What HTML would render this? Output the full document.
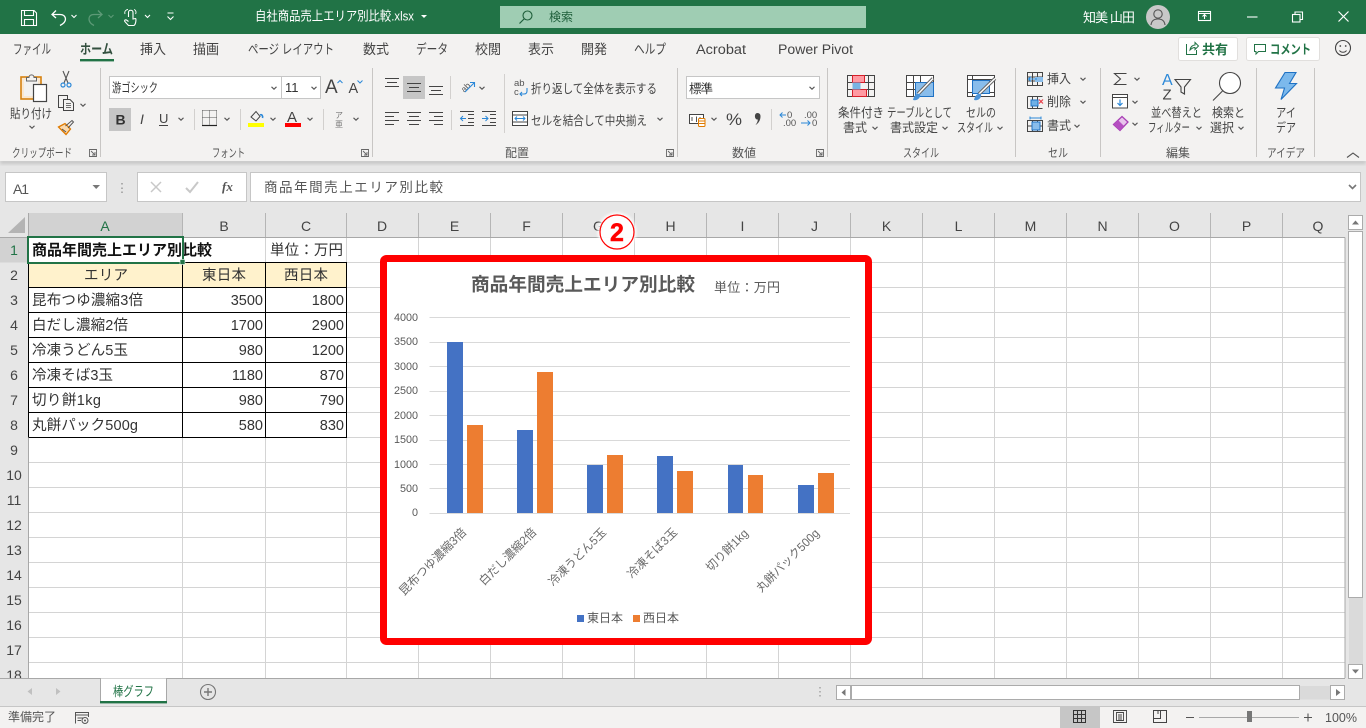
<!DOCTYPE html>
<html lang="ja"><head><meta charset="utf-8"><title>Excel</title>
<style>
html,body{margin:0;padding:0;width:1366px;height:728px;overflow:hidden;background:#e6e6e6}
svg{display:block;position:absolute;left:0;top:0}
text{font-family:"Liberation Sans","Noto Sans CJK JP",sans-serif;font-size:12px;fill:#444;white-space:pre}
.tab{font-size:13.5px;fill:#444}
.c{font-size:14.5px;fill:#333}
.h{font-size:14px;fill:#444;text-anchor:middle}
.g{font-size:12px;fill:#555}
.ax{font-size:10.8px;fill:#595959;text-anchor:end}
.rot{font-size:12px;fill:#6a6a6a;text-anchor:end}
.i{fill:none;stroke:#444;stroke-width:1}
</style></head><body>
<svg width="1366" height="728" viewBox="0 0 1366 728" xmlns="http://www.w3.org/2000/svg">
<defs>
<polyline id="ch" points="-2.5,-1.2 0,1.2 2.5,-1.2" fill="none" stroke="#555" stroke-width="1.1"/>
<filter id="sh" x="-5%" y="-50%" width="110%" height="200%"><feGaussianBlur stdDeviation="1.5"/></filter>
<filter id="gl" x="-30%" y="-30%" width="160%" height="160%"><feGaussianBlur stdDeviation="1.2"/></filter>
</defs>

<!-- base -->
<rect width="1366" height="728" fill="#e6e6e6"/>
<rect x="0" y="160" width="1366" height="4" fill="#c4c4c4" filter="url(#sh)"/>
<rect width="1366" height="161" fill="#f3f2f1"/>
<rect width="1366" height="34" fill="#217346"/>

<!-- quick access -->
<g fill="none" stroke="#fff" stroke-width="1.1">
<path d="M21.5 10.5H34L36.5 13V25.5H21.5Z"/><path d="M24.5 10.5V15.5H33.5V10.5"/><path d="M24.5 25.5V19.5H33.5V25.5"/>
<path d="M56 10.5L52 14.5L56 18M52.5 14.5H60C64 14.5 65.5 17 65.5 19C65.5 22 63 24 60 25.5" stroke-width="1.3"/>
<path d="M98 10.5L102 14.5L98 18M101.5 14.5H94C90 14.5 89 17 89 19C89 22 91 24 94 25.5" stroke="#5d9a77" stroke-width="1.3"/>
<path d="M128.5 17V12.5C128.5 9.5 133 9.5 133 12.5V19L135.5 18.5C136.5 18.5 135.8 25.5 133.5 25.5H128.5L124.8 21.5C124.2 20 125.5 19.5 126.5 20L128.5 21.5"/>
<path d="M125 14C124 11 126.5 9.5 128 9.5M134 9.5C136 10 136.5 12.5 135.5 14" stroke-width=".9"/>
</g>
<polyline points="71.5,15 74,17.5 76.5,15" fill="none" stroke="#fff" stroke-width="1.1"/>
<polyline points="108.5,15 111,17.5 113.5,15" fill="none" stroke="#5d9a77" stroke-width="1.1"/>
<polyline points="145,15 147.5,17.5 150,15" fill="none" stroke="#fff" stroke-width="1.1"/>
<path d="M167.5 13H173.5M167.5 16.5L170.5 19.5L173.5 16.5" fill="none" stroke="#fff" stroke-width="1.1"/>
<text x="255" y="20.5" style="font-size:13px;fill:#fff" textLength="159" lengthAdjust="spacingAndGlyphs">自社商品売上エリア別比較.xlsx</text>
<path d="M421 15H427L424 18Z" fill="#fff"/>

<!-- search -->
<rect x="500" y="6" width="366" height="22" fill="#9fcdb3"/>
<circle cx="527.500" cy="15.500" r="4.500" fill="none" stroke="#1f5f3b" stroke-width="1.100"/>
<path d="M524 19L519.500 23.500" stroke="#1f5f3b" stroke-width="1.200"/>
<text x="549" y="21" style="font-size:12px;fill:#1f5f3b" textLength="24">検索</text>

<!-- account -->
<text x="1083" y="22" style="font-size:13px;fill:#fff" textLength="52">知美 山田</text>
<circle cx="1158" cy="17" r="12" fill="#c8c8c8"/>
<circle cx="1158" cy="14" r="4.200" fill="none" stroke="#555" stroke-width="1.100"/>
<path d="M1151 25C1151.500 20.500 1154 19 1158 19C1162 19 1164.500 20.500 1165 25" fill="none" stroke="#555" stroke-width="1.100"/>
<g fill="none" stroke="#fff" stroke-width="1.100">
<rect x="1198.500" y="11.500" width="12" height="9"/><path d="M1198.500 13.500H1210.500M1204.500 19V15M1202.500 16.500L1204.500 14.500L1206.500 16.500"/>
<path d="M1247 17H1257.500"/>
<rect x="1292.500" y="14.500" width="7.500" height="7.500"/><path d="M1295 14.500V12H1302.500V19.500H1300"/>
<path d="M1338.500 11.500L1348.500 21.500M1348.500 11.500L1338.500 21.500" stroke-width="1.200"/>
</g>

<!-- tabs -->
<text class="tab" x="13" y="54" textLength="38" lengthAdjust="spacingAndGlyphs">ファイル</text>
<text x="80" y="54" textLength="33" lengthAdjust="spacingAndGlyphs" style="font-weight:700;fill:#33503f;font-size:13.500px">ホーム</text>
<rect x="80" y="59" width="34" height="2.400" fill="#217346"/>
<text class="tab" x="140" y="54" textLength="26" lengthAdjust="spacingAndGlyphs">挿入</text>
<text class="tab" x="193" y="54" textLength="26" lengthAdjust="spacingAndGlyphs">描画</text>
<text class="tab" x="248" y="54" textLength="86" lengthAdjust="spacingAndGlyphs">ページ レイアウト</text>
<text class="tab" x="363" y="54" textLength="26" lengthAdjust="spacingAndGlyphs">数式</text>
<text class="tab" x="416" y="54" textLength="32" lengthAdjust="spacingAndGlyphs">データ</text>
<text class="tab" x="475" y="54" textLength="26" lengthAdjust="spacingAndGlyphs">校閲</text>
<text class="tab" x="528" y="54" textLength="26" lengthAdjust="spacingAndGlyphs">表示</text>
<text class="tab" x="581" y="54" textLength="26" lengthAdjust="spacingAndGlyphs">開発</text>
<text class="tab" x="634" y="54" textLength="32" lengthAdjust="spacingAndGlyphs">ヘルプ</text>
<text class="tab" x="696" y="54" textLength="50" lengthAdjust="spacingAndGlyphs">Acrobat</text>
<text class="tab" x="778" y="54" textLength="75" lengthAdjust="spacingAndGlyphs">Power Pivot</text>

<!-- share / comment -->
<rect x="1178.500" y="37.500" width="59" height="23" rx="2" fill="#fff" stroke="#e1dfdd"/>
<path d="M1187 44.500H1186.500V54.500H1196.500V50M1190 50C1190.500 46.500 1193 45 1195 45V42.500L1198.500 46L1195 49.500V47.500C1193 47.500 1191.500 48.500 1190 50Z" fill="none" stroke="#217346" stroke-width="1"/>
<text x="1202" y="54" style="font-size:13px;font-weight:700;fill:#217346" textLength="26">共有</text>
<rect x="1246.500" y="37.500" width="73" height="23" rx="2" fill="#fff" stroke="#e1dfdd"/>
<path d="M1254.500 44.500H1265.500V51.500H1258.500L1256 54V51.500H1254.500Z" fill="none" stroke="#217346" stroke-width="1"/>
<text x="1270" y="54" style="font-size:13px;font-weight:700;fill:#217346" textLength="41" lengthAdjust="spacingAndGlyphs">コメント</text>
<circle cx="1343" cy="48" r="7.500" fill="none" stroke="#444" stroke-width="1.100"/>
<circle cx="1340.300" cy="46" r=".9" fill="#444"/><circle cx="1345.700" cy="46" r=".9" fill="#444"/>
<path d="M1339.500 50.500C1341 52.800 1345 52.800 1346.500 50.500" fill="none" stroke="#444"/>

<!-- separators -->
<path d="M100.500 68V157M372.500 68V157M677.500 68V157M827.500 68V157M1015.500 68V157M1100.500 68V157M1256.500 68V157M1314.500 68V157" stroke="#c8c6c4" fill="none"/>
<path d="M194.500 109V130M240.500 109V130M323.500 109V130M450.500 76V99M451.500 110V130M504.500 74V133M771.500 109V130" stroke="#d2d0ce" fill="none"/>

<!-- group labels -->
<text class="g" x="12" y="157" textLength="60" lengthAdjust="spacingAndGlyphs">クリップボード</text>
<text class="g" x="212" y="157" textLength="33" lengthAdjust="spacingAndGlyphs">フォント</text>
<text class="g" x="505" y="157" textLength="24" lengthAdjust="spacingAndGlyphs">配置</text>
<text class="g" x="732" y="157" textLength="24" lengthAdjust="spacingAndGlyphs">数値</text>
<text class="g" x="903" y="157" textLength="36" lengthAdjust="spacingAndGlyphs">スタイル</text>
<text class="g" x="1048" y="157" textLength="20" lengthAdjust="spacingAndGlyphs">セル</text>
<text class="g" x="1166" y="157" textLength="24" lengthAdjust="spacingAndGlyphs">編集</text>
<text class="g" x="1267" y="157" textLength="38" lengthAdjust="spacingAndGlyphs">アイデア</text>
<g fill="none" stroke="#666" stroke-width=".9">
<path d="M89.500 149.500H96.500V156.500H89.500ZM91 151L95 155M95 152V155H92"/>
<path d="M361.500 149.500H368.500V156.500H361.500ZM363 151L367 155M367 152V155H364"/>
<path d="M666.500 149.500H673.500V156.500H666.500ZM668 151L672 155M672 152V155H669"/>
<path d="M816.500 149.500H823.500V156.500H816.500ZM818 151L822 155M822 152V155H819"/>
</g>
<polyline points="1347,157.500 1353,153 1359,157.500" fill="none" stroke="#555" stroke-width="1.100"/>

<!-- clipboard -->
<rect x="21" y="77" width="20" height="22" fill="#fbe8cf" stroke="#d6810f" stroke-width="1.600"/>
<rect x="24" y="80" width="14" height="16" fill="#f3f2f1"/>
<path d="M26.500 81V77.500H29C29 74 34 74 34 77.500H36.500V81Z" fill="#f3f2f1" stroke="#666"/>
<rect x="33.500" y="84.500" width="13" height="17" fill="#fff" stroke="#444" stroke-width="1.200"/>
<text x="10" y="118" style="font-size:12.500px;fill:#444" textLength="42" lengthAdjust="spacingAndGlyphs">貼り付け</text>
<use href="#ch" x="32" y="127"/>
<path d="M63 71L68 83M69 71L64 83" stroke="#555" fill="none" stroke-width="1.100"/>
<circle cx="63" cy="85" r="2" fill="none" stroke="#2b88d8" stroke-width="1.200"/><circle cx="69" cy="85" r="2" fill="none" stroke="#2b88d8" stroke-width="1.200"/>
<g class="i"><path d="M63.500 107.500H58.500V95.500H67.500V99"/><path d="M63.500 99.500H70L73.500 103V110.500H63.500Z" fill="#f3f2f1"/><path d="M66 103.500H71M66 105.500H71M66 107.500H71" stroke-width=".8"/></g>
<use href="#ch" x="83" y="105"/>
<path d="M58.500 127L65 123.500L70.500 129L66 134.500C63 131.500 61 129.500 58.500 127Z" fill="#fbd9ac" stroke="#e07b00" stroke-width="1.300"/>
<path d="M62 129L66 132M65.500 126L72 120.500L73.500 122L68 128" stroke="#555" fill="none"/>

<!-- font -->
<rect x="109.500" y="76.500" width="172" height="22" fill="#fff" stroke="#c6c6c6"/>
<rect x="281.500" y="76.500" width="39" height="22" fill="#fff" stroke="#c6c6c6"/>
<text x="112" y="92" style="font-size:12.500px;fill:#333" textLength="46" lengthAdjust="spacingAndGlyphs">游ゴシック</text>
<text x="285" y="92" style="font-size:13px;fill:#333">11</text>
<use href="#ch" x="274" y="88"/><use href="#ch" x="314" y="88"/>
<text x="325" y="93" style="font-size:19px;fill:#444">A</text>
<path d="M337.500 83L340 80.500L342.500 83" fill="none" stroke="#2b88d8"/>
<text x="348.500" y="93" style="font-size:14.500px;fill:#444">A</text>
<path d="M357.500 80.500L360 83L362.500 80.500" fill="none" stroke="#2b88d8"/>
<rect x="109" y="108" width="22" height="23" fill="#c6c6c6"/>
<text x="115.500" y="124.500" style="font-size:14px;font-weight:700;fill:#333">B</text>
<text x="140" y="124" style="font-size:14px;font-style:italic;fill:#444">I</text>
<text x="159" y="123" style="font-size:13px;fill:#444">U</text>
<path d="M159 125.500H168" stroke="#444"/>
<use href="#ch" x="181" y="119"/>
<path d="M202.500 110.500H217M202.500 117.500H217M202.500 110.500V125M209.500 110.500V125M216.500 110.500V125" stroke="#555" stroke-dasharray="1 1" fill="none"/>
<path d="M202 125.500H217" stroke="#222" stroke-width="1.200"/>
<use href="#ch" x="227" y="119"/>
<path d="M251 117L256 111.500L260 116.500L256 121Z" fill="none" stroke="#444"/>
<path d="M260 115C262 114 263 116 262.500 118" fill="none" stroke="#2b88d8" stroke-width="1.600"/>
<rect x="248" y="123" width="16" height="4" fill="#ffff00"/>
<use href="#ch" x="273" y="119"/>
<text x="287" y="122" style="font-size:15px;fill:#444">A</text>
<rect x="285" y="123" width="16" height="4" fill="#f00"/>
<use href="#ch" x="310" y="119"/>
<text x="335" y="118" style="font-size:8px;fill:#777">ア</text>
<text x="335" y="127" style="font-size:8px;fill:#777">亜</text>
<use href="#ch" x="356" y="119"/>

<!-- alignment -->
<rect x="403" y="76" width="22" height="23" fill="#c6c6c6"/>
<g stroke="#444" fill="none">
<path d="M385 78.500H399M387 82.500H397M385 86.500H399"/>
<path d="M407 83.500H421M409 87.500H419M407 91.500H421"/>
<path d="M429 86.500H443M431 90.500H441M429 94.500H443"/>
<path d="M385 112.500H399M385 116.500H394M385 120.500H399M385 124.500H394"/>
<path d="M407 112.500H421M409 116.500H419M407 120.500H421M409 124.500H419"/>
<path d="M429 112.500H443M434 116.500H443M429 120.500H443M434 124.500H443"/>
<path d="M468 114.500H474M468 118.500H474M468 122.500H474M460 125.500H474M460 111.500H474" stroke-width=".9"/>
<path d="M490 114.500H496M490 118.500H496M490 122.500H496M482 125.500H496M482 111.500H496" stroke-width=".9"/>
</g>
<path d="M466 118.500H460.500M463 116L460.500 118.500L463 121" stroke="#2b88d8" fill="none"/>
<path d="M482 118.500H488M485.500 116L488 118.500L485.500 121" stroke="#2b88d8" fill="none"/>
<text x="459" y="90" transform="rotate(-45 465 85)" style="font-size:8.500px;fill:#555">ab</text>
<path d="M465 92L474 83M470 82.500H474.500V87" stroke="#2b88d8" fill="none" stroke-width="1.100"/>
<use href="#ch" x="482" y="88"/>
<text x="514" y="86" style="font-size:9.500px;fill:#555">ab</text>
<text x="514" y="95" style="font-size:9.500px;fill:#555">c</text>
<path d="M527 88V91C527 93 526 94 524 94H520M522 92L520 94L522 96" stroke="#2b88d8" fill="none" stroke-width="1.100"/>
<text x="531" y="93" style="font-size:12.500px;fill:#444" textLength="126" lengthAdjust="spacingAndGlyphs">折り返して全体を表示する</text>
<rect x="512.500" y="111.500" width="15" height="14" fill="#fff" stroke="#444"/>
<path d="M512.500 115H527.500M512.500 122H527.500" stroke="#444" fill="none"/>
<path d="M515 118.500H525M517 116.500L515 118.500L517 120.500M523 116.500L525 118.500L523 120.500" stroke="#2b88d8" fill="none"/>
<text x="531" y="125" style="font-size:12.500px;fill:#444" textLength="116" lengthAdjust="spacingAndGlyphs">セルを結合して中央揃え</text>
<use href="#ch" x="660" y="119"/>

<!-- number -->
<rect x="686.500" y="76.500" width="133" height="22" fill="#fff" stroke="#c6c6c6"/>
<text x="689" y="93" style="font-size:12.500px;fill:#333" textLength="24">標準</text>
<use href="#ch" x="812" y="88"/>
<rect x="689.500" y="114.500" width="14" height="9" fill="#fff" stroke="#444"/>
<path d="M692 117V121M696.500 116.500V122M700 117V121" stroke="#555" fill="none"/>
<rect x="698.500" y="118.500" width="6.500" height="8" rx="1" fill="#fff" stroke="#e07b00"/>
<path d="M698.500 121H705M698.500 123.500H705" stroke="#e07b00" fill="none"/>
<use href="#ch" x="714" y="119"/>
<text x="726" y="125" style="font-size:17px;fill:#444" textLength="16" lengthAdjust="spacingAndGlyphs">%</text>
<path d="M757.500 113a3 3 0 0 1 3 3.500c0 3.500 -2 7 -5 8.500c1.500 -2 2.300 -3.500 2.300 -5.500c-3.500 .5 -4 -6.500 -.3 -6.500Z" fill="#444"/>
<text x="787" y="118" style="font-size:9.500px;fill:#555">0</text>
<text x="783" y="126" style="font-size:9.500px;fill:#555">.00</text>
<path d="M786 115H780M782.500 112.500L780 115L782.500 117.500" stroke="#2b88d8" fill="none"/>
<text x="804" y="118" style="font-size:9.500px;fill:#555">.00</text>
<text x="812" y="126" style="font-size:9.500px;fill:#555">0</text>
<path d="M801 123H810M807.500 120.500L810 123L807.500 125.500" stroke="#2b88d8" fill="none"/>

<!-- styles -->
<g fill="none" stroke="#444" stroke-width="1">
<rect x="847.500" y="75.500" width="27" height="21"/>
<path d="M847.500 82.500H874.500M847.500 89.500H874.500M854.500 75.500V96.500M868.500 75.500V96.500"/>
</g>
<path d="M852.500 75.500H864.500V82.500H852.500ZM852.500 89.500H866.500V96.500H852.500Z" fill="#ff9aa2" stroke="#d6202a"/>
<rect x="852.500" y="82.500" width="8" height="7" fill="#79b4e3"/>
<text x="838" y="117" style="font-size:12.500px;fill:#444" textLength="46" lengthAdjust="spacingAndGlyphs">条件付き</text>
<text x="843" y="132" style="font-size:12.500px;fill:#444" textLength="24" lengthAdjust="spacingAndGlyphs">書式</text>
<use href="#ch" x="875" y="128"/>

<rect x="906.500" y="75.500" width="27" height="21" fill="#fff" stroke="#444"/>
<path d="M906.500 82.500H933.500M906.500 89.500H933.500M913.500 75.500V96.500M920.500 75.500V96.500" stroke="#444" fill="none"/>
<rect x="915.500" y="82.500" width="18" height="14" fill="#89bdeb" stroke="#1f72c4"/>
<path d="M918 94L933 78.500" stroke="#666" stroke-width="3.500"/><path d="M918 94L933 78.500" stroke="#fff" stroke-width="1.500"/>
<path d="M913 100C914 95 917 93 920 94C921 98 917 101 913 100Z" fill="#4a93d8"/>
<text x="887" y="117" style="font-size:12.500px;fill:#444" textLength="65" lengthAdjust="spacingAndGlyphs">テーブルとして</text>
<text x="890" y="132" style="font-size:12.500px;fill:#444" textLength="48" lengthAdjust="spacingAndGlyphs">書式設定</text>
<use href="#ch" x="945" y="128"/>

<rect x="967.500" y="75.500" width="27" height="21" fill="#fff" stroke="#444"/>
<path d="M967.500 79.500H994.500M967.500 92.500H994.500M972.500 75.500V96.500" stroke="#444" fill="none"/>
<rect x="972.500" y="80.500" width="17" height="13" fill="#89bdeb" stroke="#1f72c4"/>
<path d="M979 94L995 78.500" stroke="#666" stroke-width="3.500"/><path d="M979 94L995 78.500" stroke="#fff" stroke-width="1.500"/>
<path d="M974 100C975 95 978 93 981 94C982 98 978 101 974 100Z" fill="#4a93d8"/>
<text x="966" y="117" style="font-size:12.500px;fill:#444" textLength="30" lengthAdjust="spacingAndGlyphs">セルの</text>
<text x="957" y="132" style="font-size:12.500px;fill:#444" textLength="36" lengthAdjust="spacingAndGlyphs">スタイル</text>
<use href="#ch" x="1000" y="128"/>

<!-- cells -->
<g fill="none" stroke="#444">
<path d="M1027.500 72.500H1042.500V85.500H1027.500ZM1027.500 77H1042.500M1027.500 81H1042.500M1032.500 72.500V85.500M1037.500 72.500V85.500"/>
<path d="M1027.500 96.500H1042.500M1027.500 108.500H1042.500M1027.500 96.500V108.500M1032.500 96.500V108.500M1037.500 96.500V100M1037.500 105V108.500"/>
<path d="M1027.500 120.500H1042.500V131.500H1027.500ZM1027.500 126H1042.500M1032.500 120.500V131.500M1037.500 120.500V131.500"/>
</g>
<rect x="1035" y="77" width="8" height="5" fill="#89bdeb"/>
<path d="M1037 79H1028.500M1031 76.500L1028.500 79L1031 81.500" stroke="#2b88d8" fill="none"/>
<rect x="1031" y="100" width="7" height="6" fill="#6fb0e6" stroke="#1f72c4"/>
<path d="M1039 99.500L1043 103.500M1043 99.500L1039 103.500" stroke="#e8404a" stroke-width="1.200"/>
<rect x="1032" y="122" width="8" height="8" fill="#89bdeb" stroke="#1f72c4"/>
<path d="M1030 118H1041M1030 116.500V119.500M1041 116.500V119.500" stroke="#2b88d8" fill="none"/>
<text x="1047" y="83" style="font-size:12.500px;fill:#444" textLength="24" lengthAdjust="spacingAndGlyphs">挿入</text>
<text x="1047" y="106" style="font-size:12.500px;fill:#444" textLength="24" lengthAdjust="spacingAndGlyphs">削除</text>
<text x="1047" y="130" style="font-size:12.500px;fill:#444" textLength="24" lengthAdjust="spacingAndGlyphs">書式</text>
<use href="#ch" x="1083" y="79"/><use href="#ch" x="1083" y="102"/><use href="#ch" x="1077" y="126"/>

<!-- editing -->
<path d="M1126.500 73.500H1114.500L1120.500 79L1114.500 84.500H1126.500" fill="none" stroke="#444" stroke-width="1.100"/>
<use href="#ch" x="1137" y="79"/>
<rect x="1112.500" y="94.500" width="15" height="13.500" fill="#fff" stroke="#444"/>
<path d="M1112.500 97.500H1127.500" stroke="#444"/>
<path d="M1120 99.500V105.500M1117.500 103L1120 105.500L1122.500 103" stroke="#2b88d8" fill="none" stroke-width="1.200"/>
<use href="#ch" x="1135" y="102"/>
<path d="M1113.500 124.500L1122 116.500L1128 122L1120 130.500Z" fill="#e8c4ec" stroke="#a83fb5" stroke-width="1.300"/>
<path d="M1113.500 124.500L1118 120L1124 126L1120 130.500Z" fill="#b54fc1"/>
<use href="#ch" x="1135" y="124"/>
<text x="1162" y="85" style="font-size:16px;fill:#2b88d8">A</text>
<text x="1162.500" y="99.500" style="font-size:15px;fill:#444">Z</text>
<path d="M1175 79.500H1190.500L1184.500 87V94L1181 92V87Z" fill="none" stroke="#444" stroke-width="1.100"/>
<text x="1151" y="117" style="font-size:12.500px;fill:#444" textLength="51" lengthAdjust="spacingAndGlyphs">並べ替えと</text>
<text x="1148" y="132" style="font-size:12.500px;fill:#444" textLength="42" lengthAdjust="spacingAndGlyphs">フィルター</text>
<use href="#ch" x="1199" y="128"/>
<circle cx="1230" cy="83" r="10.500" fill="#fff" stroke="#444" stroke-width="1.100"/>
<path d="M1222.500 91L1213 100.500" stroke="#444" stroke-width="1.100"/>
<text x="1212" y="117" style="font-size:12.500px;fill:#444" textLength="33" lengthAdjust="spacingAndGlyphs">検索と</text>
<text x="1210" y="132" style="font-size:12.500px;fill:#444" textLength="24" lengthAdjust="spacingAndGlyphs">選択</text>
<use href="#ch" x="1241" y="128"/>

<!-- ideas -->
<path d="M1285 72.500H1296L1289.500 83.500H1296.500L1281 99.500L1284.500 88H1275.500Z" fill="#7cb9ec" stroke="#1f72c4" stroke-width="1.100"/>
<text x="1276" y="117" style="font-size:12.500px;fill:#444" textLength="20" lengthAdjust="spacingAndGlyphs">アイ</text>
<text x="1276" y="132" style="font-size:12.500px;fill:#444" textLength="20" lengthAdjust="spacingAndGlyphs">デア</text>

<!-- formula bar -->
<rect x="5.500" y="172.500" width="101" height="29" fill="#fff" stroke="#c6c6c6"/>
<text x="13" y="194" style="font-size:14px;fill:#555" textLength="16">A1</text>
<path d="M92.500 185H100L96.200 189Z" fill="#777"/>
<path d="M122 183v1.500M122 187.500v1.500M122 191.500v1.500" stroke="#999" stroke-width="1.500"/>
<rect x="137.500" y="172.500" width="109" height="29" fill="#fff" stroke="#c6c6c6"/>
<path d="M151 182L161 192M161 182L151 192" stroke="#c8c8c8" stroke-width="1.500" fill="none"/>
<path d="M186 188L190 192L198 182" stroke="#c8c8c8" stroke-width="2" fill="none"/>
<text x="222" y="191" style="font-size:13px;font-style:italic;font-weight:700;fill:#555;font-family:'Liberation Serif',serif">fx</text>
<rect x="250.500" y="172.500" width="1110" height="29" fill="#fff" stroke="#c6c6c6"/>
<text x="264" y="192" style="font-size:13.500px;fill:#555" textLength="179">商品年間売上エリア別比較</text>
<polyline points="1349,185 1352.500,188.500 1356,185" fill="none" stroke="#777" stroke-width="1.600"/>

<!-- grid headers -->
<rect x="0" y="213" width="1346" height="25" fill="#e6e6e6"/>
<rect x="29" y="213" width="153.500" height="24" fill="#d2d2d2"/>
<rect x="0" y="238" width="29" height="24.500" fill="#d2d2d2"/>
<path d="M25 217V233H8Z" fill="#b4b4b4"/>
<path d="M182.500 213V237M265.500 213V237M346.500 213V237M418.500 213V237M490.500 213V237M562.500 213V237M634.500 213V237M706.500 213V237M778.500 213V237M850.500 213V237M922.500 213V237M994.500 213V237M1066.500 213V237M1138.500 213V237M1210.500 213V237M1282.500 213V237" stroke="#b5b5b5" fill="none"/>

<rect x="29" y="238" width="1316" height="440" fill="#fff"/>
<path d="M182.500 238V678M265.500 238V678M346.500 238V678M418.500 238V678M490.500 238V678M562.500 238V678M634.500 238V678M706.500 238V678M778.500 238V678M850.500 238V678M922.500 238V678M994.500 238V678M1066.500 238V678M1138.500 238V678M1210.500 238V678M1282.500 238V678" stroke="#d4d4d4" fill="none"/>
<path d="M29 262.500H1345M29 287.500H1345M29 312.500H1345M29 337.500H1345M29 362.500H1345M29 387.500H1345M29 412.500H1345M29 437.500H1345M29 462.500H1345M29 487.500H1345M29 512.500H1345M29 537.500H1345M29 562.500H1345M29 587.500H1345M29 612.500H1345M29 637.500H1345M29 662.500H1345" stroke="#d4d4d4" fill="none"/>
<path d="M0 237.500H1345M28.500 213V678M1345 237.500V678" stroke="#a8a8a8" fill="none"/>

<text class="h" x="105" y="231" style="fill:#217346">A</text><text class="h" x="224" y="231">B</text><text class="h" x="306" y="231">C</text><text class="h" x="382" y="231">D</text><text class="h" x="454.500" y="231">E</text><text class="h" x="526.500" y="231">F</text><text class="h" x="598.500" y="231">G</text><text class="h" x="670.500" y="231">H</text><text class="h" x="742.500" y="231">I</text><text class="h" x="814.500" y="231">J</text><text class="h" x="886.500" y="231">K</text><text class="h" x="958.500" y="231">L</text><text class="h" x="1030.500" y="231">M</text><text class="h" x="1102.500" y="231">N</text><text class="h" x="1174.500" y="231">O</text><text class="h" x="1246.500" y="231">P</text><text class="h" x="1318" y="231">Q</text>
<text class="h" x="14" y="255" style="fill:#217346">1</text><text class="h" x="14" y="280">2</text><text class="h" x="14" y="305">3</text><text class="h" x="14" y="330">4</text><text class="h" x="14" y="355">5</text><text class="h" x="14" y="380">6</text><text class="h" x="14" y="405">7</text><text class="h" x="14" y="430">8</text><text class="h" x="14" y="455">9</text><text class="h" x="14" y="480">10</text><text class="h" x="14" y="505">11</text><text class="h" x="14" y="530">12</text><text class="h" x="14" y="555">13</text><text class="h" x="14" y="580">14</text><text class="h" x="14" y="605">15</text><text class="h" x="14" y="630">16</text><text class="h" x="14" y="655">17</text><text class="h" x="14" y="680">18</text>

<!-- table -->
<rect x="29" y="263" width="318" height="24" fill="#fff2cc"/>
<path d="M29 262.500H347M29 287.500H347M29 312.500H347M29 337.500H347M29 362.500H347M29 387.500H347M29 412.500H347M29 437.500H347M182.500 262.500V437.500M265.500 262.500V437.500M346.500 262.500V437.500M28.500 262.500V437.500" stroke="#000" fill="none"/>
<text x="32" y="255" style="font-size:15px;font-weight:700;fill:#111" textLength="180" lengthAdjust="spacingAndGlyphs">商品年間売上エリア別比較</text>
<text class="c" x="270" y="255" textLength="73">単位：万円</text>
<text class="c" x="84" y="280" textLength="44">エリア</text>
<text class="c" x="202" y="280" textLength="44">東日本</text>
<text class="c" x="284" y="280" textLength="44">西日本</text>
<text class="c" x="32" y="305" textLength="111">昆布つゆ濃縮3倍</text>
<text class="c" x="32" y="330" textLength="96">白だし濃縮2倍</text>
<text class="c" x="32" y="355" textLength="96">冷凍うどん5玉</text>
<text class="c" x="32" y="380" textLength="81">冷凍そば3玉</text>
<text class="c" x="32" y="405" textLength="69">切り餅1kg</text>
<text class="c" x="32" y="430" textLength="106">丸餅パック500g</text>
<text class="c" x="263" y="305" text-anchor="end">3500</text><text class="c" x="344" y="305" text-anchor="end">1800</text>
<text class="c" x="263" y="330" text-anchor="end">1700</text><text class="c" x="344" y="330" text-anchor="end">2900</text>
<text class="c" x="263" y="355" text-anchor="end">980</text><text class="c" x="344" y="355" text-anchor="end">1200</text>
<text class="c" x="263" y="380" text-anchor="end">1180</text><text class="c" x="344" y="380" text-anchor="end">870</text>
<text class="c" x="263" y="405" text-anchor="end">980</text><text class="c" x="344" y="405" text-anchor="end">790</text>
<text class="c" x="263" y="430" text-anchor="end">580</text><text class="c" x="344" y="430" text-anchor="end">830</text>
<rect x="28" y="237" width="155" height="26" fill="none" stroke="#217346" stroke-width="2"/>
<rect x="180" y="259.500" width="5" height="5" fill="#217346" stroke="#fff" stroke-width=".6"/>

<!-- chart -->
<rect x="383.500" y="258.500" width="485" height="383" rx="3" fill="#fff" stroke="#f00" stroke-width="7"/>
<text x="471" y="291" style="font-size:18.600px;font-weight:700;fill:#595959" textLength="224" lengthAdjust="spacingAndGlyphs">商品年間売上エリア別比較</text>
<text x="714" y="292" style="font-size:13px;fill:#595959" textLength="66">単位：万円</text>
<path d="M429.500 317.500H850M429.500 342.500H850M429.500 366.500H850M429.500 391.500H850M429.500 415.500H850M429.500 440.500H850M429.500 464.500H850M429.500 488.500H850M429.500 513.500H850" stroke="#d9d9d9" fill="none"/>
<text class="ax" x="418" y="321">4000</text><text class="ax" x="418" y="345">3500</text><text class="ax" x="418" y="370">3000</text><text class="ax" x="418" y="394">2500</text><text class="ax" x="418" y="419">2000</text><text class="ax" x="418" y="443">1500</text><text class="ax" x="418" y="468">1000</text><text class="ax" x="418" y="492">500</text><text class="ax" x="418" y="516">0</text>
<g fill="#4472c4">
<rect x="447" y="342" width="16" height="171"/><rect x="517" y="430" width="16" height="83"/><rect x="587" y="465" width="16" height="48"/><rect x="657" y="456" width="16" height="57"/><rect x="728" y="465" width="15" height="48"/><rect x="798" y="485" width="16" height="28"/>
</g>
<g fill="#ed7d31">
<rect x="467" y="425" width="16" height="88"/><rect x="537" y="372" width="16" height="141"/><rect x="607" y="455" width="16" height="58"/><rect x="677" y="471" width="16" height="42"/><rect x="748" y="475" width="15" height="38"/><rect x="818" y="473" width="16" height="40"/>
</g>
<text class="rot" transform="translate(467 533) rotate(-45)" textLength="89" lengthAdjust="spacingAndGlyphs">昆布つゆ濃縮3倍</text>
<text class="rot" transform="translate(537 533) rotate(-45)" textLength="75" lengthAdjust="spacingAndGlyphs">白だし濃縮2倍</text>
<text class="rot" transform="translate(607 533) rotate(-45)" textLength="76" lengthAdjust="spacingAndGlyphs">冷凍うどん5玉</text>
<text class="rot" transform="translate(678 533) rotate(-45)" textLength="65" lengthAdjust="spacingAndGlyphs">冷凍そば3玉</text>
<text class="rot" transform="translate(749 534) rotate(-45)" textLength="54" lengthAdjust="spacingAndGlyphs">切り餅1kg</text>
<text class="rot" transform="translate(820 534) rotate(-45)" textLength="83" lengthAdjust="spacingAndGlyphs">丸餅パック500g</text>
<rect x="577" y="615" width="7" height="7" fill="#4472c4"/>
<text x="587" y="622" style="font-size:12px;fill:#595959" textLength="36">東日本</text>
<rect x="633" y="615" width="7" height="7" fill="#ed7d31"/>
<text x="643" y="622" style="font-size:12px;fill:#595959" textLength="36">西日本</text>

<!-- step badge -->
<circle cx="617" cy="232" r="19.500" fill="#fff" opacity=".85" filter="url(#gl)"/>
<circle cx="617" cy="232" r="17" fill="#fff" fill-opacity=".75" stroke="#f00" stroke-width="1.200"/>
<text x="617" y="241" text-anchor="middle" style="font-size:25px;font-weight:700;fill:#f00;stroke:#f00;stroke-width:.5px;font-family:'Liberation Sans',sans-serif">2</text>

<!-- vertical scrollbar -->
<rect x="1346" y="213" width="20" height="466" fill="#e6e6e6"/>
<rect x="1348.500" y="215.500" width="14" height="14" fill="#fff" stroke="#ababab"/>
<path d="M1352 224.500H1359L1355.500 220.500Z" fill="#777"/>
<rect x="1348.500" y="231.500" width="14" height="366" fill="#fff" stroke="#ababab"/>
<rect x="1349" y="598" width="14" height="66" fill="#dadada"/>
<rect x="1348.500" y="664.500" width="14" height="14" fill="#fff" stroke="#ababab"/>
<path d="M1352 669.500H1359L1355.500 673.500Z" fill="#777"/>

<!-- sheet tabs -->
<rect x="0" y="679" width="1366" height="28" fill="#e6e6e6"/>
<path d="M0 678.500H1345" stroke="#a8a8a8"/>
<path d="M32 688V695L27.500 691.500ZM56 688V695L60.500 691.500Z" fill="#c0c0c0"/>
<path d="M100.500 678.500V702H166.500V678.500" fill="#fff" stroke="#a8a8a8"/>
<rect x="100" y="701" width="67" height="2.400" fill="#217346"/>
<text x="113" y="696" style="font-size:13px;fill:#217346" textLength="41" lengthAdjust="spacingAndGlyphs">棒グラフ</text>
<circle cx="208" cy="692" r="7.500" fill="none" stroke="#777" stroke-width="1.100"/>
<path d="M204 692H212M208 688V696" stroke="#777" stroke-width="1.400"/>
<path d="M820 687v1.500M820 691v1.500M820 695v1.500" stroke="#999" stroke-width="1.300"/>
<rect x="836.500" y="685.500" width="14" height="14" fill="#fff" stroke="#ababab"/>
<path d="M845.500 689V696L841.500 692.500Z" fill="#777"/>
<rect x="851.500" y="685.500" width="448" height="14" fill="#fff" stroke="#ababab"/>
<rect x="1300" y="686" width="31" height="13.500" fill="#dadada"/>
<rect x="1330.500" y="685.500" width="14" height="14" fill="#fff" stroke="#ababab"/>
<path d="M1336 689V696L1340.500 692.500Z" fill="#777"/>

<!-- status bar -->
<rect x="0" y="707" width="1366" height="21" fill="#f3f2f1"/>
<path d="M0 706.500H1366" stroke="#c6c6c6"/>
<text x="8" y="721" style="font-size:12px;fill:#555" textLength="48">準備完了</text>
<path d="M75.500 723.500V712.500H88.500V717M75.500 715H88.500M77.500 718H83M77.500 720.500H81" stroke="#555" fill="none"/>
<circle cx="85" cy="720.500" r="3" fill="none" stroke="#555"/><circle cx="85" cy="720.500" r="1" fill="#555"/>
<rect x="1060" y="707" width="40" height="21" fill="#c6c6c6"/>
<path d="M1073.500 710.500H1085.500V722.500H1073.500ZM1073.500 714.500H1085.500M1073.500 718.500H1085.500M1077.500 710.500V722.500M1081.500 710.500V722.500" stroke="#333" fill="none"/>
<path d="M1113.500 710.500H1126.500V722.500H1113.500ZM1116.500 712.500H1123.500V720.500H1116.500ZM1118 715H1122M1118 717H1122M1118 719H1122" stroke="#444" fill="none" stroke-width=".9"/>
<path d="M1153.500 710.500H1166.500V722.500H1153.500ZM1153.500 718.500H1160.500V710.500M1158 710.500V714" stroke="#444" fill="none"/>
<path d="M1186 717.500H1194M1304 717.500H1312M1308 713.500V721.500" stroke="#555" fill="none" stroke-width="1.100"/>
<path d="M1199 717.500H1299" stroke="#a8a8a8"/>
<rect x="1247" y="711" width="5" height="11" fill="#777"/>
<text x="1325" y="722" style="font-size:12.500px;fill:#555" textLength="32">100%</text>
</svg>
</body></html>
